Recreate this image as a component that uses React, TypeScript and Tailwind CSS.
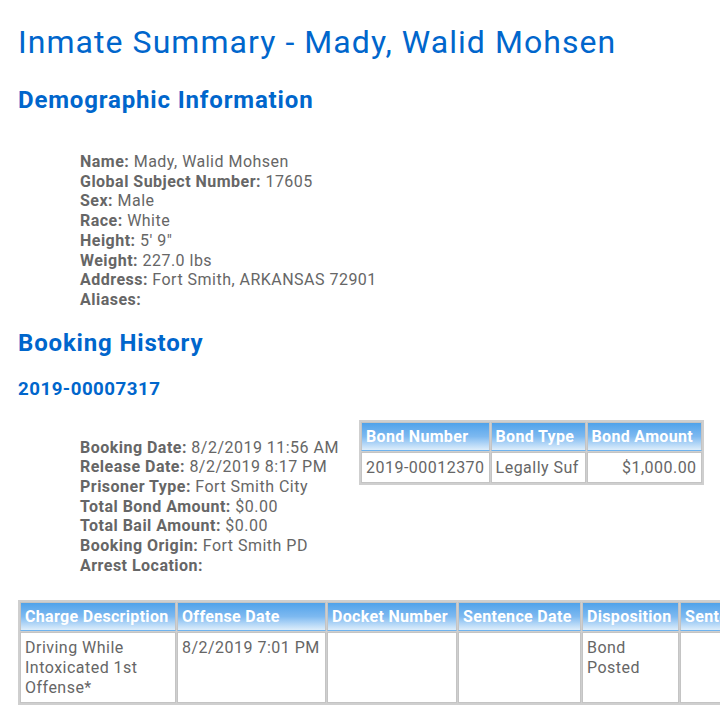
import React from 'react';

const demographics = [
    { label: 'Name:', value: 'Mady, Walid Mohsen' },
    { label: 'Global Subject Number:', value: '17605' },
    { label: 'Sex:', value: 'Male' },
    { label: 'Race:', value: 'White' },
    { label: 'Height:', value: '5\' 9"' },
    { label: 'Weight:', value: '227.0 lbs' },
    { label: 'Address:', value: 'Fort Smith, ARKANSAS 72901' },
    { label: 'Aliases:', value: '' },
];

const booking = [
    { label: 'Booking Date:', value: '8/2/2019 11:56 AM' },
    { label: 'Release Date:', value: '8/2/2019 8:17 PM' },
    { label: 'Prisoner Type:', value: 'Fort Smith City' },
    { label: 'Total Bond Amount:', value: '$0.00' },
    { label: 'Total Bail Amount:', value: '$0.00' },
    { label: 'Booking Origin:', value: 'Fort Smith PD' },
    { label: 'Arrest Location:', value: '' },
];

const thClass =
    'border border-[#c4c4c4] border-b-[#6fb3ee] bg-linear-to-b from-[#4fa2ea] via-[#7db9f0] to-[#deeefb] px-[4px] pt-[4px] pb-[3px] text-left font-bold text-white whitespace-nowrap leading-[20px] tracking-[0.02em]';
const tdClass = 'border border-[#c4c4c4] bg-white px-[4px] pt-[5px] pb-[4px] align-top leading-[20px]';

const InfoList: React.FC<{ items: { label: string; value: string }[] }> = ({ items }) => (
    <div className="text-[16px] leading-[19.7px] text-[#666666]">
        {items.map((item) => (
            <div key={item.label}>
                <span className="font-bold">{item.label}</span> {item.value}
            </div>
        ))}
    </div>
);

export default function App() {
    return (
        <div className="w-[720px] overflow-hidden bg-white font-['Roboto',sans-serif] tracking-[0.03em]">
            <div className="px-[18px] pb-[30px]">
                <h1 className="mt-[24px] text-[32px] leading-[37px] tracking-[0.033em] text-[#0066cc]">
                    Inmate Summary - Mady, Walid Mohsen
                </h1>
                <h2 className="mt-[25px] text-[24px] font-bold leading-[28px] tracking-[0.035em] text-[#0066cc]">
                    Demographic Information
                </h2>
                <div className="mt-[38px] pl-[62px]">
                    <InfoList items={demographics} />
                </div>

                <h2 className="mt-[19px] text-[24px] font-bold leading-[28px] tracking-[0.035em] text-[#0066cc]">
                    Booking History
                </h2>
                <h3 className="mt-[20px] text-[18.72px] font-bold leading-[24px] text-[#0066cc]">2019-00007317</h3>

                <div className="mt-[19px] flex items-start">
                    <div className="w-[341px] shrink-0 pt-[18px] pl-[62px]">
                        <InfoList items={booking} />
                    </div>
                    {/* Bond table */}
                    <table className="w-max shrink-0 border-separate border-spacing-[1px] border border-[#cfcfcf] bg-[#cfcfcf] text-[16px] text-[#666666]">
                        <thead>
                            <tr>
                                <th className={`${thClass} w-[127px]`}>Bond Number</th>
                                <th className={`${thClass} w-[95px]`}>Bond Type</th>
                                <th className={`${thClass} w-[115px]`}>Bond Amount</th>
                            </tr>
                        </thead>
                        <tbody>
                            <tr>
                                <td className={`${tdClass} whitespace-nowrap`}>2019-00012370</td>
                                <td className={`${tdClass} whitespace-nowrap`}>Legally Suf</td>
                                <td className={`${tdClass} text-right whitespace-nowrap`}>$1,000.00</td>
                            </tr>
                        </tbody>
                    </table>
                </div>

                {/* Charges */}
                <table className="mt-[24px] w-max border-separate border-spacing-[1px] border border-[#cfcfcf] bg-[#cfcfcf] text-[16px] text-[#666666]">
                    <thead>
                        <tr>
                            <th className={`${thClass} w-[156px]`}>Charge Description</th>
                            <th className={`${thClass} w-[149px]`}>Offense Date</th>
                            <th className={`${thClass} w-[130px]`}>Docket Number</th>
                            <th className={`${thClass} w-[123px]`}>Sentence Date</th>
                            <th className={`${thClass} w-[97px]`}>Disposition</th>
                            <th className={`${thClass} w-[150px]`}>Sentence Length</th>
                        </tr>
                    </thead>
                    <tbody>
                        <tr>
                            <td className={`${tdClass} h-[68px]`}>Driving While Intoxicated 1st Offense*</td>
                            <td className={`${tdClass} whitespace-nowrap`}>8/2/2019 7:01 PM</td>
                            <td className={tdClass}></td>
                            <td className={tdClass}></td>
                            <td className={tdClass}>Bond Posted</td>
                            <td className={tdClass}></td>
                        </tr>
                    </tbody>
                </table>
            </div>
        </div>
    );
}
